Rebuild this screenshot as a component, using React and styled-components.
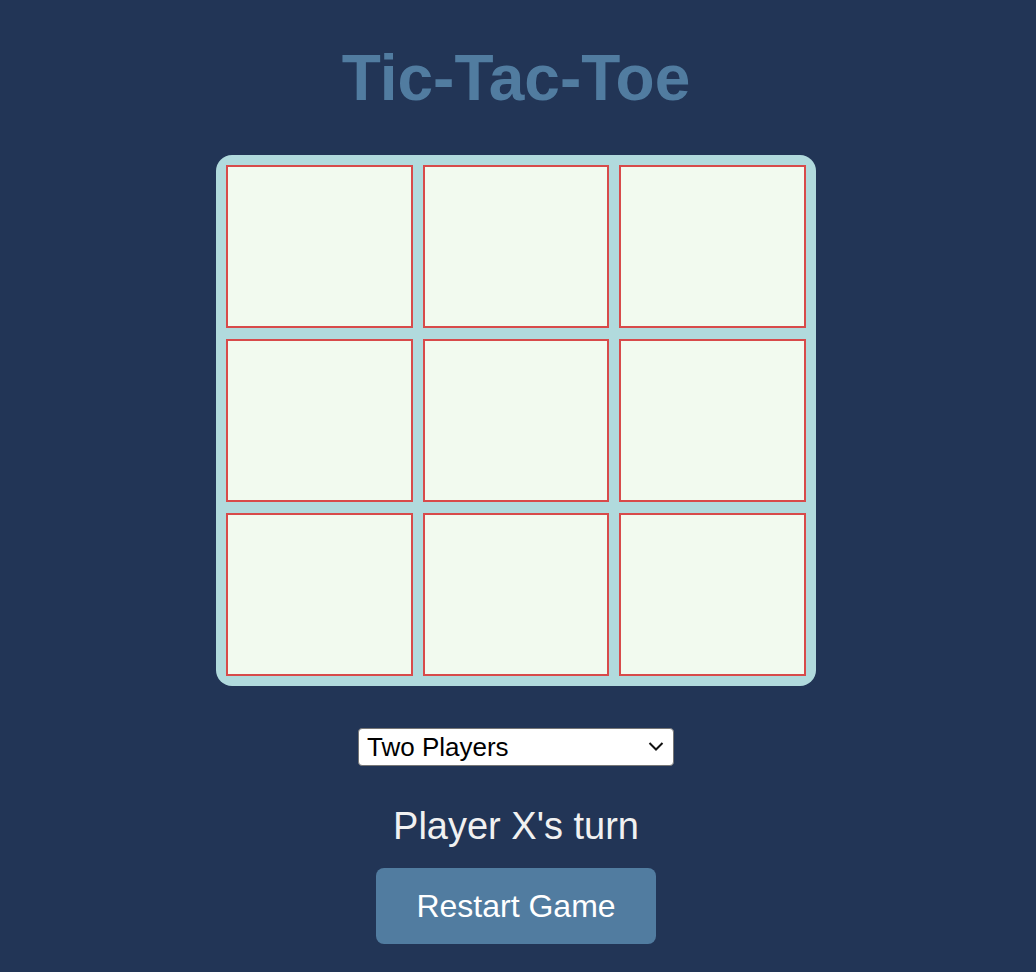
import React, { useState } from "react";
import styled, { createGlobalStyle } from "styled-components";

const GlobalStyle = createGlobalStyle`
  html, body {
    margin: 0;
    padding: 0;
    background: #223556;
    font-family: "Liberation Sans", Arial, sans-serif;
  }
`;

const Page = styled.main`
  display: flex;
  flex-direction: column;
  align-items: center;
  padding: 42px 4px 30px 0;
  min-height: 972px;
  box-sizing: border-box;
`;

const Title = styled.h1`
  margin: 0;
  font-size: 64px;
  line-height: 72px;
  font-weight: 700;
  color: #517ca0;
`;

const Board = styled.div`
  margin-top: 41px;
  width: 600px;
  box-sizing: border-box;
  padding: 10px;
  display: grid;
  grid-template-columns: 187px 186px 187px;
  grid-auto-rows: 163px;
  column-gap: 10px;
  row-gap: 11px;
  background: #b1dadd;
  border-radius: 16px;
`;

const Cell = styled.div`
  background: #f2faef;
  border: 2px solid #d84a4a;
  cursor: pointer;
`;

const SelectWrap = styled.div`
  position: relative;
  margin-top: 42px;
  width: 316px;
  height: 38px;
`;

const ModeSelect = styled.select`
  appearance: none;
  -webkit-appearance: none;
  width: 100%;
  height: 100%;
  font-family: "Liberation Sans", Arial, sans-serif;
  font-size: 26px;
  color: #000;
  background: #fff;
  border: 1px solid #767676;
  border-radius: 4px;
  padding: 0 36px 0 8px;
  outline: none;
`;

const Chevron = styled.svg`
  position: absolute;
  right: 10px;
  top: 13px;
  width: 16px;
  height: 11px;
  pointer-events: none;
`;

const Status = styled.p`
  margin: 38px 0 0;
  font-size: 38px;
  line-height: 44px;
  color: #f1f1f1;
`;

const RestartButton = styled.button`
  margin-top: 20px;
  width: 280px;
  height: 76px;
  border: none;
  border-radius: 8px;
  background: #517ca0;
  color: #fff;
  font-family: "Liberation Sans", Arial, sans-serif;
  font-size: 32px;
  cursor: pointer;
`;

export default function App() {
  const [cells] = useState(Array(9).fill(null));
  return (
    <Page>
      <GlobalStyle />
      <Title>Tic-Tac-Toe</Title>
      <Board>
        {cells.map((c, i) => (
          <Cell key={i}>{c}</Cell>
        ))}
      </Board>
      <SelectWrap>
        <ModeSelect defaultValue="two">
          <option value="two">Two Players</option>
          <option value="ai">Against Computer</option>
        </ModeSelect>
        <Chevron viewBox="0 0 16 11">
          <path d="M1.5 2 L8 8.5 L14.5 2" fill="none" stroke="#111" strokeWidth="2" />
        </Chevron>
      </SelectWrap>
      <Status>Player X's turn</Status>
      <RestartButton>Restart Game</RestartButton>
    </Page>
  );
}
